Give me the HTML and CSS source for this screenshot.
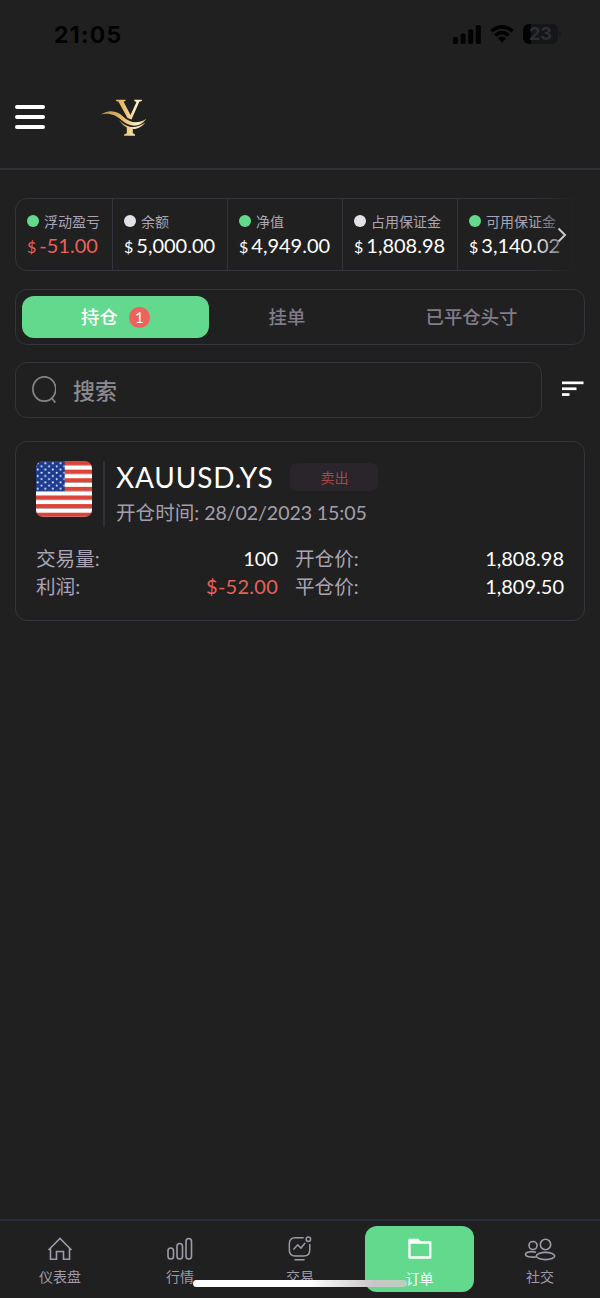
FILE: index.html
```html
<!DOCTYPE html>
<html lang="zh-CN">
<head>
<meta charset="utf-8">
<title>订单</title>
<link rel="stylesheet" href="styles.css">
</head>
<body>
<div class="screen">
  <div class="status">
    <span class="clock">21:05</span>
    <div class="status-icons">
      <svg width="28" height="19" viewBox="0 0 28 19"><rect x="0" y="12" width="5" height="7" rx="1.5"/><rect x="7.6" y="8.500" width="5" height="10.500" rx="1.500"/><rect x="15.200" y="4.500" width="5" height="14.500" rx="1.500"/><rect x="22.800" y="0" width="5" height="19" rx="1.500"/></svg>
      <svg width="24" height="18" viewBox="0 0 24 18"><g fill="none" stroke="#020203" stroke-width="3.600"><path d="M1.400 6.200Q12-2.600 22.600 6.200"/><path d="M5.300 10.500Q12 4.800 18.700 10.500"/></g><path d="M7.800 13.300Q12 9.800 16.200 13.300L12 17.800Z"/></svg>
      <div class="battery"><span>23</span><i></i></div>
    </div>
  </div>

  <header class="header">
    <div class="burger"><i></i><i></i><i></i></div>
    <svg class="logo" width="48" height="40" viewBox="0 0 48 40">
      <defs><linearGradient id="gold" gradientUnits="userSpaceOnUse" x1="0" x2="46" y1="0" y2="0"><stop offset="0" stop-color="#b98d42"/><stop offset=".5" stop-color="#e8bf70"/><stop offset=".8" stop-color="#fff3ce"/><stop offset="1" stop-color="#d4b066"/></linearGradient></defs>
      <g fill="url(#gold)">
        <path d="M15 2.800H24.500V4L22.500 4.500L29.500 18L35.500 5L33.300 4V2.800H41V4L38.300 4.700L30.500 22.500L26.500 21L17.500 4.700L15 4Z"/>
        <path d="M25.800 29.500L31.800 30.500V36.200L34 37.500V38.800H23V37.500L25.800 36.200Z"/>
        <path d="M0 17.400C9 12 17 14.500 22 19.500C29 26.500 38 27 45.500 21.500C39 31 29 30.500 21 23.500C14 17.400 8 15.800 0 17.400Z"/>
        <path d="M18 23C26 32 36 32 44.500 25.200C37.500 35 25 34 18 23Z"/>
      </g>
    </svg>
  </header>

  <main class="content">
    <section class="stats">
      <div class="stats-track">
        <div class="stat first"><div class="stat-label"><i class="dot green"></i>浮动盈亏</div><div class="stat-value red"><small>$</small><b>-51.00</b></div></div>
        <div class="stat"><div class="stat-label"><i class="dot"></i>余额</div><div class="stat-value"><small>$</small><b>5,000.00</b></div></div>
        <div class="stat"><div class="stat-label"><i class="dot green"></i>净值</div><div class="stat-value"><small>$</small><b>4,949.00</b></div></div>
        <div class="stat"><div class="stat-label"><i class="dot"></i>占用保证金</div><div class="stat-value"><small>$</small><b>1,808.98</b></div></div>
        <div class="stat"><div class="stat-label"><i class="dot green"></i>可用保证金</div><div class="stat-value"><small>$</small><b>3,140.02</b></div></div>
      </div>
      <div class="fade"><svg width="10" height="16" viewBox="0 0 10 16"><path d="M1.500 1.500L8 8L1.500 14.500" fill="none" stroke="#c9c8d0" stroke-width="2"/></svg></div>
    </section>

    <nav class="tabs">
      <div class="tab active">持仓<span class="badge">1</span></div>
      <div class="tab">挂单</div>
      <div class="tab">已平仓头寸</div>
    </nav>

    <div class="search-row">
      <div class="search">
        <svg width="24" height="30" viewBox="0 0 24 30"><g fill="none" stroke="#85848a" stroke-width="1.700"><ellipse cx="12.300" cy="14" rx="11.400" ry="12.200"/><path d="M19.500 22.800L23.300 27.600"/></g></svg>
        <span>搜索</span>
      </div>
      <svg class="sort" width="22" height="16" viewBox="0 0 22 16" fill="#fff"><rect width="21.500" height="2.700" y=".5"/><rect width="14.500" height="2.700" y="6.400"/><rect width="7.500" height="2.700" y="12.200"/></svg>
    </div>

    <article class="card">
      <div class="card-head">
        <svg class="flag" width="56" height="56" viewBox="0 0 56 56">
          <defs>
            <pattern id="stripes" width="56" height="8.616" patternUnits="userSpaceOnUse"><rect width="56" height="4.308" fill="#dc4438"/><rect y="4.308" width="56" height="4.308" fill="#fff"/></pattern>
            <pattern id="stars" width="7.600" height="6.400" patternUnits="userSpaceOnUse"><circle cx="1.700" cy="2.200" r="1.050" fill="#e9efff"/><circle cx="5.500" cy="5.300" r="1.050" fill="#e9efff"/></pattern>
          </defs>
          <rect width="56" height="56" fill="url(#stripes)"/><rect width="28.700" height="30.200" fill="#1b3a90"/><rect width="28.700" height="30.200" fill="url(#stars)"/>
        </svg>
        <div class="title-block">
          <div class="title-row"><span class="symbol">XAUUSD.YS</span><span class="side">卖出</span></div>
          <div class="opened">开仓时间: <span>28/02/2023 15:05</span></div>
        </div>
      </div>
      <div class="details">
        <div class="pair"><span>交易量:</span><b>100</b></div>
        <div class="pair"><span>开仓价:</span><b>1,808.98</b></div>
        <div class="pair"><span>利润:</span><b class="red">$-52.00</b></div>
        <div class="pair"><span>平仓价:</span><b>1,809.50</b></div>
      </div>
    </article>
  </main>

  <footer class="bottom">
    <div class="item"><svg width="26" height="26" viewBox="0 0 26 26"><path d="M1.500 14L13 2.500L24.500 14M3.500 12.500V23.200H9.500V15.500H16.500V23.200H22.500V12.500"/></svg><span>仪表盘</span></div>
    <div class="item"><svg width="26" height="26" viewBox="0 0 26 26"><rect x="1" y="12" width="5.500" height="11" rx="2.750"/><rect x="10" y="7.500" width="5.500" height="15.500" rx="2.750"/><rect x="19" y="2.500" width="5.500" height="20.500" rx="2.750"/></svg><span>行情</span></div>
    <div class="item"><svg width="26" height="28" viewBox="0 0 26 28"><path d="M17 2H8Q1.500 2 1.500 8.500V15Q1.500 21.500 8 21.500H17Q23.500 21.500 23.500 15V8.500M7 25.500H18M6 14.500L10.500 9.500L14 13L18.500 7.500"/><circle cx="22" cy="3.500" r="2.400"/></svg><span>交易</span></div>
    <div class="item current"><svg width="26" height="26" viewBox="0 0 26 26"><path d="M2.500 6.500H23.300V21.500H2.500ZM2.500 6.500V4H11L13 6.500" stroke-width="2.300" stroke-linejoin="round"/></svg><span>订单</span></div>
    <div class="item"><svg width="32" height="26" viewBox="0 0 32 26"><circle cx="9" cy="9.500" r="4"/><circle cx="21.500" cy="8.500" r="5.200"/><ellipse cx="21.500" cy="20" rx="9.200" ry="3.600"/><path d="M12 16.300C6 14.500 1.500 16.500 1.500 18.500C1.500 20.500 6 21.600 12 21"/></svg><span>社交</span></div>
    <div class="home-indicator"></div>
  </footer>
</div>
</body>
</html>
```

FILE: styles.css
```css
* { box-sizing: border-box; }
body { margin: 0; background: #202020; color: #fff; font-family: Lato, "Noto Sans CJK SC", sans-serif; }
b { font-weight: 400; }
svg { display: block; flex: none; }
.screen { width: 600px; height: 1298px; display: flex; flex-direction: column; overflow: hidden; }
.status { height: 68px; display: flex; justify-content: space-between; align-items: center; padding: 0 39px 0 54px; }
.clock { font: 700 23px/24px Inter, sans-serif; color: #020203; letter-spacing: 1.2px; padding-top: 1px; }
.status-icons { display: flex; align-items: center; gap: 9px; fill: #020203; }
.battery { position: relative; width: 35px; height: 20px; border-radius: 6px; background: linear-gradient(90deg, #020203 24%, #15161a 24%); color: #2e2e33; font: 700 18px/20px Inter, sans-serif; text-align: center; margin-right: 3px; }
.battery i { position: absolute; right: -3px; top: 7px; width: 2px; height: 6px; border-radius: 1px; background: #18191d; }
.header { height: 102px; border-bottom: 2px solid #30323a; display: flex; align-items: flex-start; gap: 56px; padding: 29px 15px 0; }
.burger { display: flex; flex-direction: column; gap: 5.5px; padding-top: 8px; }
.burger i { width: 30px; height: 4.300px; border-radius: 2px; background: #fff; }
.content { flex: 1; padding: 28px 15px 0; }
.stats { position: relative; }
.stats-track { height: 73px; display: flex; border: 1px solid #34353c; border-radius: 12px; overflow: hidden; }
.stat { flex: none; width: 115px; border-right: 1px solid #34353c; padding: 10px 0 0 11px; white-space: nowrap; }
.stat.first { width: 97px; }
.stat-label { display: flex; align-items: center; gap: 6px; height: 23px; font-size: 14px; color: #aaa4b4; }
.dot { width: 12px; height: 12px; border-radius: 50%; background: #e3e1e6; }
.dot.green { background: #62d98c; }
.stat-label .dot { margin-right: -1px; }
.stat-value { display: flex; align-items: baseline; gap: 3px; font-size: 20px; line-height: 26px; }
.stat-value small { font-size: 16px; }
.red { color: #e7605c; }
.fade { position: absolute; right: 0; top: 0; width: 50px; height: 73px; background: linear-gradient(90deg, rgba(32,32,32,0), rgba(32,32,32,.9) 75%, #202020 90%); display: flex; align-items: center; padding-left: 22px; }
.tabs { height: 56px; margin-top: 18px; border: 1px solid #34353c; border-radius: 12px; padding: 6px; display: grid; grid-template-columns: 187px 156px 1fr; font-size: 18.400px; font-weight: 500; color: #817c8a; }
.tab { display: flex; align-items: center; justify-content: center; padding-bottom: 2px; }
.tab.active { background: #62d98c; color: #fff; border-radius: 12px; gap: 11px; }
.badge { width: 21px; height: 21px; border-radius: 50%; background: #ee625c; font: 15px/21px Lato, sans-serif; text-align: center; margin-top: 2px; }
.search-row { display: flex; align-items: center; margin-top: 17px; gap: 20px; }
.search { width: 527px; height: 56px; border: 1px solid #34353c; border-radius: 12px; display: flex; align-items: center; padding-left: 16px; gap: 17px; font-size: 22px; color: #8b8a90; }
.search span { padding-bottom: 3px; font-weight: 500; }
.sort { margin-top: -3px; }
.card { height: 180px; margin-top: 23px; border: 1px solid #34353c; border-radius: 12px; padding: 19px 20px; }
.card-head { display: flex; }
.flag { border-radius: 7px; }
.title-block { height: 66px; margin-left: 11px; border-left: 2px solid #303038; padding-left: 11px; }
.title-row { display: flex; align-items: center; height: 31px; gap: 17px; }
.symbol { font-size: 28px; letter-spacing: .82px; }
.side { width: 88px; height: 28px; border-radius: 7px; background: #29252a; color: #a54745; font-size: 14px; line-height: 29px; text-align: center; }
.opened { height: 36px; line-height: 42px; font-size: 19.600px; color: #a49fae; white-space: nowrap; }
.opened span { letter-spacing: -.1px; }
.details { display: grid; grid-template-columns: 242px 1fr; column-gap: 17px; margin-top: 17px; font-size: 20px; line-height: 28px; }
.pair { display: flex; justify-content: space-between; height: 28px; }
.pair span { font-size: 19.600px; line-height: 29px; color: #aaa4b4; }
.pair b.red { letter-spacing: .25px; }
.bottom { position: relative; height: 79px; border-top: 2px solid #252e3a; display: grid; grid-template-columns: repeat(5, 1fr); color: #9f9aa9; }
.item { display: flex; flex-direction: column; align-items: center; padding-top: 15px; gap: 5px; font-size: 14px; line-height: 20px; }
.item svg { height: 26px; fill: none; stroke: #9f9aa9; stroke-width: 1.600; }
.item.current { width: 109px; height: 66px; margin: 5px 0 0 5px; padding-top: 10px; gap: 7px; border-radius: 12px; background: #62d98c; color: #fff; }
.item.current svg { stroke: #fff; }
.home-indicator { position: absolute; left: 193px; top: 59px; width: 214px; height: 7px; border-radius: 4px; background: linear-gradient(90deg, #fff 55%, #c8c5c7 85%, #b8cfbd); }
```
